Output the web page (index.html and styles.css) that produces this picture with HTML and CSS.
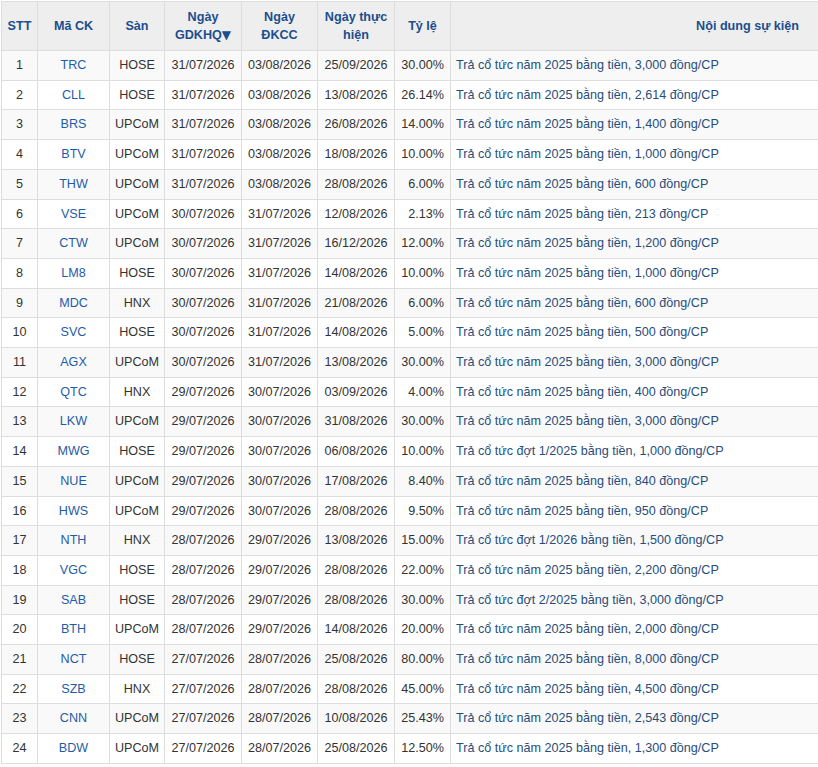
FILE: index.html
```html
<!DOCTYPE html>
<html lang="vi">
<head>
<meta charset="utf-8">
<title>Lịch sự kiện</title>
<link rel="stylesheet" href="styles.css">
</head>
<body>
<div class="wrap">
<table class="events">
<colgroup>
<col class="c-stt"><col class="c-ma"><col class="c-san"><col class="c-d1"><col class="c-d2"><col class="c-d3"><col class="c-tl"><col class="c-nd">
</colgroup>
<thead>
<tr>
<th>STT</th><th>Mã CK</th><th>Sàn</th><th>Ngày<br>GDKHQ<span class="sort">▼</span></th><th>Ngày<br>ĐKCC</th><th>Ngày thực hiện</th><th>Tỷ lệ</th><th class="nd-h">Nội dung sự kiện</th>
</tr>
</thead>
<tbody>
<tr><td>1</td><td class="ma">TRC</td><td>HOSE</td><td>31/07/2026</td><td>03/08/2026</td><td>25/09/2026</td><td class="tl">30.00%</td><td class="nd">Trả cổ tức năm 2025 bằng tiền, 3,000 đồng/CP</td></tr>
<tr><td>2</td><td class="ma">CLL</td><td>HOSE</td><td>31/07/2026</td><td>03/08/2026</td><td>13/08/2026</td><td class="tl">26.14%</td><td class="nd">Trả cổ tức năm 2025 bằng tiền, 2,614 đồng/CP</td></tr>
<tr><td>3</td><td class="ma">BRS</td><td>UPCoM</td><td>31/07/2026</td><td>03/08/2026</td><td>26/08/2026</td><td class="tl">14.00%</td><td class="nd">Trả cổ tức năm 2025 bằng tiền, 1,400 đồng/CP</td></tr>
<tr><td>4</td><td class="ma">BTV</td><td>UPCoM</td><td>31/07/2026</td><td>03/08/2026</td><td>18/08/2026</td><td class="tl">10.00%</td><td class="nd">Trả cổ tức năm 2025 bằng tiền, 1,000 đồng/CP</td></tr>
<tr><td>5</td><td class="ma">THW</td><td>UPCoM</td><td>31/07/2026</td><td>03/08/2026</td><td>28/08/2026</td><td class="tl">6.00%</td><td class="nd">Trả cổ tức năm 2025 bằng tiền, 600 đồng/CP</td></tr>
<tr><td>6</td><td class="ma">VSE</td><td>UPCoM</td><td>30/07/2026</td><td>31/07/2026</td><td>12/08/2026</td><td class="tl">2.13%</td><td class="nd">Trả cổ tức năm 2025 bằng tiền, 213 đồng/CP</td></tr>
<tr><td>7</td><td class="ma">CTW</td><td>UPCoM</td><td>30/07/2026</td><td>31/07/2026</td><td>16/12/2026</td><td class="tl">12.00%</td><td class="nd">Trả cổ tức năm 2025 bằng tiền, 1,200 đồng/CP</td></tr>
<tr><td>8</td><td class="ma">LM8</td><td>HOSE</td><td>30/07/2026</td><td>31/07/2026</td><td>14/08/2026</td><td class="tl">10.00%</td><td class="nd">Trả cổ tức năm 2025 bằng tiền, 1,000 đồng/CP</td></tr>
<tr><td>9</td><td class="ma">MDC</td><td>HNX</td><td>30/07/2026</td><td>31/07/2026</td><td>21/08/2026</td><td class="tl">6.00%</td><td class="nd">Trả cổ tức năm 2025 bằng tiền, 600 đồng/CP</td></tr>
<tr><td>10</td><td class="ma">SVC</td><td>HOSE</td><td>30/07/2026</td><td>31/07/2026</td><td>14/08/2026</td><td class="tl">5.00%</td><td class="nd">Trả cổ tức năm 2025 bằng tiền, 500 đồng/CP</td></tr>
<tr><td>11</td><td class="ma">AGX</td><td>UPCoM</td><td>30/07/2026</td><td>31/07/2026</td><td>13/08/2026</td><td class="tl">30.00%</td><td class="nd">Trả cổ tức năm 2025 bằng tiền, 3,000 đồng/CP</td></tr>
<tr><td>12</td><td class="ma">QTC</td><td>HNX</td><td>29/07/2026</td><td>30/07/2026</td><td>03/09/2026</td><td class="tl">4.00%</td><td class="nd">Trả cổ tức năm 2025 bằng tiền, 400 đồng/CP</td></tr>
<tr><td>13</td><td class="ma">LKW</td><td>UPCoM</td><td>29/07/2026</td><td>30/07/2026</td><td>31/08/2026</td><td class="tl">30.00%</td><td class="nd">Trả cổ tức năm 2025 bằng tiền, 3,000 đồng/CP</td></tr>
<tr><td>14</td><td class="ma">MWG</td><td>HOSE</td><td>29/07/2026</td><td>30/07/2026</td><td>06/08/2026</td><td class="tl">10.00%</td><td class="nd">Trả cổ tức đợt 1/2025 bằng tiền, 1,000 đồng/CP</td></tr>
<tr><td>15</td><td class="ma">NUE</td><td>UPCoM</td><td>29/07/2026</td><td>30/07/2026</td><td>17/08/2026</td><td class="tl">8.40%</td><td class="nd">Trả cổ tức năm 2025 bằng tiền, 840 đồng/CP</td></tr>
<tr><td>16</td><td class="ma">HWS</td><td>UPCoM</td><td>29/07/2026</td><td>30/07/2026</td><td>28/08/2026</td><td class="tl">9.50%</td><td class="nd">Trả cổ tức năm 2025 bằng tiền, 950 đồng/CP</td></tr>
<tr><td>17</td><td class="ma">NTH</td><td>HNX</td><td>28/07/2026</td><td>29/07/2026</td><td>13/08/2026</td><td class="tl">15.00%</td><td class="nd">Trả cổ tức đợt 1/2026 bằng tiền, 1,500 đồng/CP</td></tr>
<tr><td>18</td><td class="ma">VGC</td><td>HOSE</td><td>28/07/2026</td><td>29/07/2026</td><td>28/08/2026</td><td class="tl">22.00%</td><td class="nd">Trả cổ tức năm 2025 bằng tiền, 2,200 đồng/CP</td></tr>
<tr><td>19</td><td class="ma">SAB</td><td>HOSE</td><td>28/07/2026</td><td>29/07/2026</td><td>28/08/2026</td><td class="tl">30.00%</td><td class="nd">Trả cổ tức đợt 2/2025 bằng tiền, 3,000 đồng/CP</td></tr>
<tr><td>20</td><td class="ma">BTH</td><td>UPCoM</td><td>28/07/2026</td><td>29/07/2026</td><td>14/08/2026</td><td class="tl">20.00%</td><td class="nd">Trả cổ tức năm 2025 bằng tiền, 2,000 đồng/CP</td></tr>
<tr><td>21</td><td class="ma">NCT</td><td>HOSE</td><td>27/07/2026</td><td>28/07/2026</td><td>25/08/2026</td><td class="tl">80.00%</td><td class="nd">Trả cổ tức năm 2025 bằng tiền, 8,000 đồng/CP</td></tr>
<tr><td>22</td><td class="ma">SZB</td><td>HNX</td><td>27/07/2026</td><td>28/07/2026</td><td>28/08/2026</td><td class="tl">45.00%</td><td class="nd">Trả cổ tức năm 2025 bằng tiền, 4,500 đồng/CP</td></tr>
<tr><td>23</td><td class="ma">CNN</td><td>UPCoM</td><td>27/07/2026</td><td>28/07/2026</td><td>10/08/2026</td><td class="tl">25.43%</td><td class="nd">Trả cổ tức năm 2025 bằng tiền, 2,543 đồng/CP</td></tr>
<tr><td>24</td><td class="ma">BDW</td><td>UPCoM</td><td>27/07/2026</td><td>28/07/2026</td><td>25/08/2026</td><td class="tl">12.50%</td><td class="nd">Trả cổ tức năm 2025 bằng tiền, 1,300 đồng/CP</td></tr>
</tbody>
</table>
</div>
</body>
</html>
```

FILE: styles.css
```css
html, body {
  margin: 0;
  padding: 0;
  background: #ffffff;
  overflow: hidden;
}

.wrap {
  padding: 1px 0 0 1px;
}

.events {
  border-collapse: collapse;
  table-layout: fixed;
  width: 817px;
  font-family: "Liberation Sans", Arial, sans-serif;
  font-size: 12.6px;
  color: #333333;
}

.c-stt { width: 36px; }
.c-ma { width: 72px; }
.c-san { width: 55px; }
.c-d1 { width: 77px; }
.c-d2 { width: 76px; }
.c-d3 { width: 77px; }
.c-tl { width: 56px; }
.c-nd { width: auto; }

.events th,
.events td {
  border: 1px solid #dddddd;
  text-align: center;
  vertical-align: middle;
}

.events th:last-child,
.events td:last-child {
  border-right: none;
}

.events th {
  background: #eeeeee;
  color: #1c4e8e;
  font-weight: bold;
  line-height: 18px;
  height: 36px;
  padding: 6px 4px;
}

.events th.nd-h {
  text-align: right;
  padding-right: 19px;
}

.sort {
  font-family: "DejaVu Sans", sans-serif;
  font-size: 12px;
}

.events td {
  line-height: 18.7px;
  padding: 5px 4px;
  white-space: nowrap;
}

.events tbody tr:nth-child(odd) td {
  background: #f9f9f9;
}

.events td.ma {
  color: #1f5ca8;
}

.events td.tl {
  text-align: right;
  padding-right: 6px;
}

.events td.nd {
  text-align: left;
  color: #284d7a;
  padding-left: 5px;
}
```
